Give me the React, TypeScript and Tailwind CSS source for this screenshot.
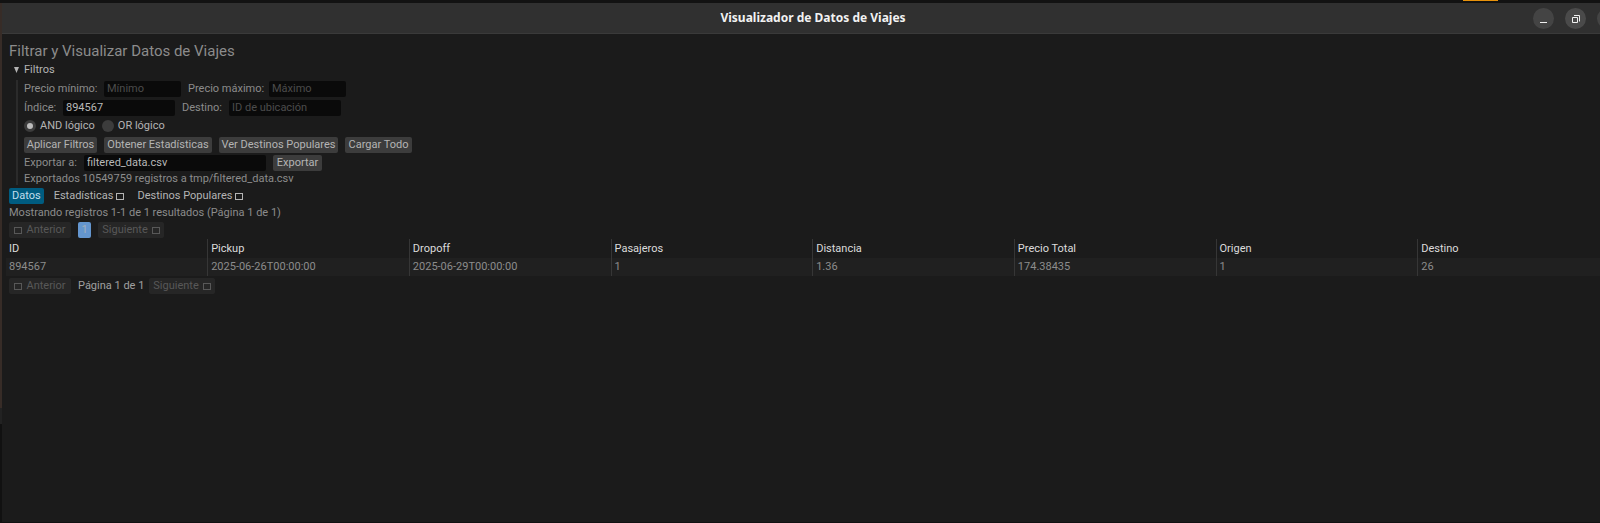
import { useState } from "react";
import type { ComponentProps, ReactNode } from "react";
import { clsx } from "clsx";

const columns = ["ID", "Pickup", "Dropoff", "Pasajeros", "Distancia", "Precio Total", "Origen", "Destino"];
const rows = [["894567", "2025-06-26T00:00:00", "2025-06-29T00:00:00", "1", "1.36", "174.38435", "1", "26"]];

function Box() {
  return <span aria-hidden="true" className="inline-block h-[7px] w-2 border border-current" />;
}

function Button({ className, ...props }: ComponentProps<"button">) {
  return (
    <button
      type="button"
      className={clsx("flex h-4 items-center justify-center rounded-xs bg-[#3c3c3c] whitespace-nowrap text-[#b4b4b4]", className)}
      {...props}
    />
  );
}

function Field({ label, id, labelClass, className, ...props }: ComponentProps<"input"> & { label: string; labelClass: string }) {
  return (
    <div className="flex items-center gap-[7px]">
      <label htmlFor={id} className={clsx("whitespace-nowrap text-[#8c8c8c]", labelClass)}>
        {label}
      </label>
      <input
        id={id}
        type="text"
        className={clsx("h-4 rounded-xs bg-[#0a0a0a] px-[3px] text-[#b8b8b8] outline-none placeholder:text-[#4c4c4c]", className)}
        {...props}
      />
    </div>
  );
}

function Radio({ children, ...props }: ComponentProps<"input"> & { children: ReactNode }) {
  return (
    <label className="flex items-center gap-1 text-[#b4b4b4]">
      <input
        type="radio"
        name="logic"
        className="size-3 appearance-none rounded-full bg-[#3c3c3c] checked:border-[3px] checked:border-[#3c3c3c] checked:bg-[#bcbcbc]"
        {...props}
      />
      {children}
    </label>
  );
}

function Previous() {
  return (
    <Button disabled className="w-[62px] gap-1 bg-[#262626]! text-[#585858]!">
      <Box /> Anterior
    </Button>
  );
}

function Next() {
  return (
    <Button disabled className="w-[66px] gap-1 bg-[#262626]! text-[#585858]!">
      Siguiente <Box />
    </Button>
  );
}

function TitleBar() {
  return (
    <header className="grid h-[31px] shrink-0 grid-cols-[1fr_auto_1fr] items-center overflow-hidden border-b border-[#3a3a3a] bg-[#303030]">
      <span />
      <h1 className="pl-6 font-['Noto_Sans',sans-serif] text-[12px] font-bold text-[#f2f2f2]">Visualizador de Datos de Viajes</h1>
      <div className="-mr-[18px] flex justify-end gap-[11px]">
        <button type="button" aria-label="Minimizar" className="grid size-[21px] place-items-center rounded-full bg-[#444444]">
          <svg viewBox="0 0 21 21" className="size-[21px]">
            <path d="M7 14.5h7" stroke="#f0f0f0" />
          </svg>
        </button>
        <button type="button" aria-label="Restaurar" className="grid size-[21px] place-items-center rounded-full bg-[#4a4a4a]">
          <svg viewBox="0 0 21 21" className="size-[21px]" fill="none" stroke="#f0f0f0">
            <path d="M7.500 9.500h5v5h-5z" />
            <path d="M9 7.500h5.500v6" />
          </svg>
        </button>
        <button type="button" aria-label="Cerrar" className="size-[21px] rounded-full bg-[#444444]" />
      </div>
    </header>
  );
}

export default function App() {
  const [logic, setLogic] = useState("and");
  const [open, setOpen] = useState(true);
  const [tab, setTab] = useState("datos");
  const tabs = [
    { id: "datos", label: "Datos", box: false },
    { id: "estadisticas", label: "Estadísticas", box: true },
    { id: "destinos", label: "Destinos Populares", box: true },
  ];

  return (
    <div className="flex min-h-screen flex-col bg-[#1b1b1b] font-[Roboto,sans-serif] text-[11px] leading-4 text-[#8c8c8c]">
      <div className="flex h-[3px] shrink-0 justify-end bg-[#121212] pr-[102px]">
        <span className="h-px w-[35px] bg-[#e8920c]" />
      </div>
      <div className="flex grow">
        <div className="flex w-[2px] shrink-0 flex-col">
          <span className="h-[405px] bg-[#372c27]" />
          <span className="h-4 bg-[#222222]" />
          <span className="grow bg-[#111111]" />
        </div>
        <div className="flex min-w-0 grow flex-col overflow-hidden border-b border-[#111111]">
          <TitleBar />
          <main className="flex flex-col pt-[6px]">
            <section className="flex flex-col pl-[7px]">
              <h2 className="text-[15px] leading-[22px] text-[#8c8c8c]">Filtrar y Visualizar Datos de Viajes</h2>
              <button
                type="button"
                aria-expanded={open}
                onClick={() => setOpen(!open)}
                className="flex h-4 items-center gap-[5px] self-start pl-[5px] text-[#b4b4b4]"
              >
                <svg viewBox="0 0 5 6" className={clsx("h-[6px] w-[5px]", !open && "-rotate-90")} fill="currentColor">
                  <path d="M0 0h5L2.500 6z" />
                </svg>
                Filtros
              </button>
              {open && (
                <div className="mt-[2px] ml-[7px] flex flex-col gap-[2px] border-l-2 border-[#2b2b2b] pl-[6px]">
                  <div className="flex h-[17px] items-center gap-[7px]">
                    <Field id="min" label="Precio mínimo:" labelClass="w-[73px]" placeholder="Mínimo" className="w-[77px]" />
                    <Field id="max" label="Precio máximo:" labelClass="w-[74px]" placeholder="Máximo" className="w-[77px]" />
                  </div>
                  <div className="flex h-[17px] items-center gap-[7px]">
                    <Field id="index" label="Índice:" labelClass="w-8" defaultValue="894567" className="w-28" />
                    <Field id="dest" label="Destino:" labelClass="w-10" placeholder="ID de ubicación" className="w-28" />
                  </div>
                  <div className="flex h-4 items-center gap-[7px]">
                    <Radio checked={logic === "and"} onChange={() => setLogic("and")}>AND lógico</Radio>
                    <Radio checked={logic === "or"} onChange={() => setLogic("or")}>OR lógico</Radio>
                  </div>
                  <div className="flex h-[17px] items-center gap-[7px]">
                    <Button className="w-[73px]">Aplicar Filtros</Button>
                    <Button className="w-[108px]">Obtener Estadísticas</Button>
                    <Button className="w-[119px]">Ver Destinos Populares</Button>
                    <Button className="w-[67px]">Cargar Todo</Button>
                  </div>
                  <div className="flex h-4 items-center gap-[7px]">
                    <Field id="export" label="Exportar a:" labelClass="w-[53px]" defaultValue="filtered_data.csv" className="w-[182px]" />
                    <Button className="w-[49px]">Exportar</Button>
                  </div>
                  <p className="leading-3">Exportados 10549759 registros a tmp/filtered_data.csv</p>
                </div>
              )}
              <nav className="mt-[3px] flex gap-[7px]">
                {tabs.map((t) => (
                  <button
                    key={t.id}
                    type="button"
                    onClick={() => setTab(t.id)}
                    className={clsx(
                      "flex h-4 items-center gap-[3px] rounded-xs px-[3px]",
                      tab === t.id ? "bg-[#005c80] text-[#c0deec]" : "text-[#b4b4b4]",
                    )}
                  >
                    {t.label} {t.box && <Box />}
                  </button>
                ))}
              </nav>
              <p className="my-[3px] leading-3">Mostrando registros 1-1 de 1 resultados (Página 1 de 1)</p>
              <div className="flex gap-[7px]">
                <Previous />
                <Button className="w-[13px] bg-[#6496cf]! text-[#a3b0bd]!">1</Button>
                <Next />
              </div>
            </section>
            <table className="mt-px ml-1 w-full table-fixed border-collapse">
              <thead>
                <tr className="h-[19px]">
                  {columns.map((c, i) => (
                    <th
                      key={c}
                      scope="col"
                      className={clsx("p-0 pl-[3px] text-left font-normal text-[#dcdcdc]", i < 7 && "w-[12.62%] border-r border-[#363636]")}
                    >
                      {c}
                    </th>
                  ))}
                </tr>
              </thead>
              <tbody>
                {rows.map((r) => (
                  <tr key={r[0]} className="h-[18px] bg-[#202020]">
                    {r.map((v, i) => (
                      <td key={columns[i]} className={clsx("p-0 pl-[3px]", i < 7 && "border-r border-[#363636]")}>
                        {v}
                      </td>
                    ))}
                  </tr>
                ))}
              </tbody>
            </table>
            <div className="mt-[2px] flex gap-[7px] pl-[7px]">
              <Previous />
              <span className="w-16 whitespace-nowrap text-[#a0a0a0]">Página 1 de 1</span>
              <Next />
            </div>
          </main>
        </div>
      </div>
    </div>
  );
}
